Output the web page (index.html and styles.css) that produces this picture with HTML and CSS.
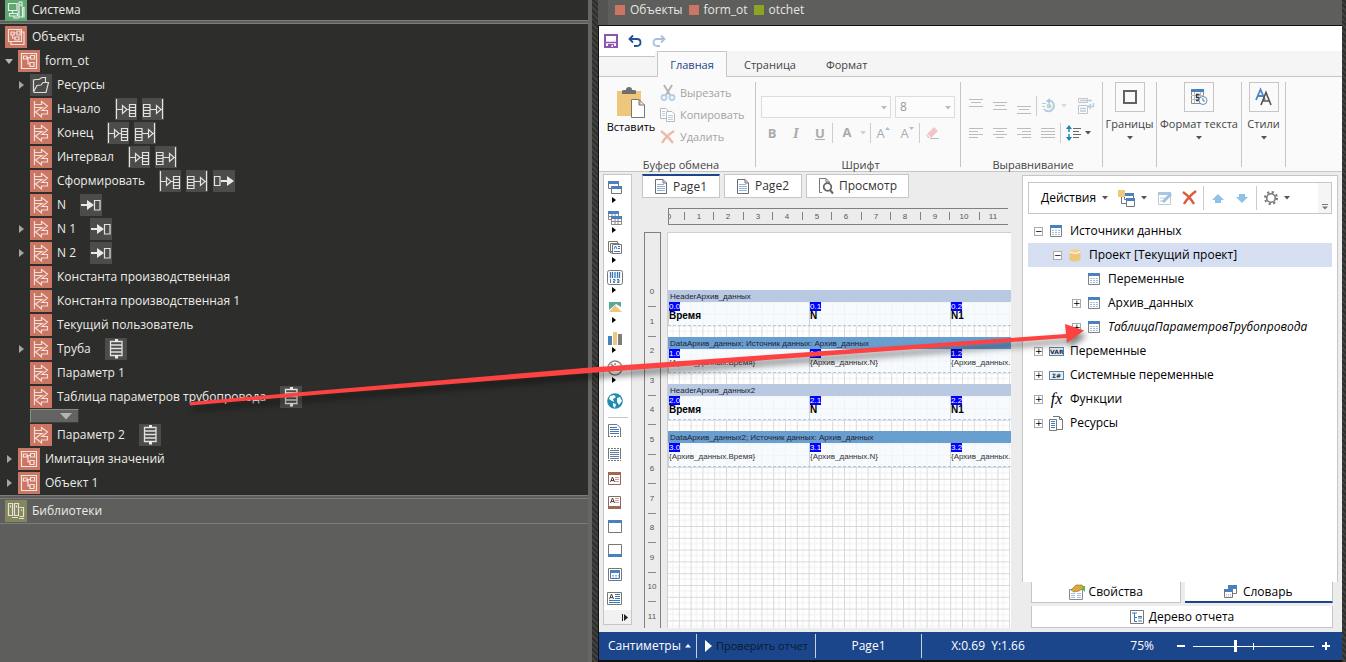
FILE: index.html
```html
<!DOCTYPE html>
<html lang="ru">
<head>
<meta charset="utf-8">
<title>otchet</title>
<link rel="stylesheet" href="styles.css">
</head>
<body>
<svg class="defs" aria-hidden="true">
  <symbol id="system" viewBox="0 0 22 22"><g fill="none" stroke="#e9efe9" stroke-width="1.2"><path d="M3.500 4.500H12V11.500H3.500ZM7.500 11.500V14M4.500 14.500H12.500V17H4.500ZM14 3H17V8M14 3V18H17.500V8.500M14 6H17M17.500 8.500H19V18.500M9 17V19H14M12.500 13H14"/></g></symbol>
  <symbol id="objects" viewBox="0 0 22 22"><g fill="none" stroke="#f6dfda" stroke-width="1.200"><path d="M3.500 3.500H16.500V15.500H3.500ZM6 16V18.500H19V6H17M6 6H9V9H6ZM12 5H15V9H12ZM9 7H12M7.500 9V12H10M10 11H14V14H10Z"/></g></symbol>
  <symbol id="form" viewBox="0 0 22 22"><g fill="none" stroke="#f6e4e0" stroke-width="1.200"><path d="M3.500 3.500H18.500V18.500H3.500ZM5.500 6H9V9H5.500ZM12.500 5.500H16.500V9H12.500ZM9 7.500H12.500M10 7.500V14H12M12 12.500H16V16.500H12Z"/></g></symbol>
  <symbol id="param" viewBox="0 0 22 22"><path d="M4.500 3V19M4.500 6.500H11.500V3.500L17.500 8L12 12.500H17.500V16H11.500V19L5.500 14L12 9.500H5" fill="none" stroke="#f3ddd8" stroke-width="1.200"/></symbol>
  <symbol id="folder" viewBox="0 0 22 22"><path d="M3.500 18V6L6 5.500H9L12 3.500H15.500V8M3.500 18L7 11.500L11 11L13 8.500H18.500L16 18.500L3.500 18.500" fill="none" stroke="#dedede" stroke-width="1.200"/></symbol>
  <symbol id="library" viewBox="0 0 22 22"><path d="M3.500 3.500H7.500V15.500H3.500ZM9.500 3.500H13.500V15.500H9.500ZM14.500 7.500H18.500V16.500H14.500M5.500 5.500V7.500M11.500 5.500V7.500M16.500 9.500V11M7 17.500H13M14 18.500H19" fill="none" stroke="#e4e4d2" stroke-width="1.200"/></symbol>
  <symbol id="b-in" viewBox="0 0 22 22"><path d="M1.500 1V21M1.500 11.500H7M7.500 7.500V15.500L12 11.500ZM12 11.500H14M14.500 6.500H20.500V18.500H14.500ZM14.500 9.500H20.500M14.500 12.500H20.500M14.500 15.500H20.500" fill="none" stroke="#e2e2e0" stroke-width="1.200"/></symbol>
  <symbol id="b-out" viewBox="0 0 22 22"><path d="M20.500 1V21M8 11.500H14M14.500 7.500V15.500L19 11.500ZM19 11.500H20M1.500 6.500H8V18.500H1.500ZM1.500 9.500H8M1.500 12.500H8M1.500 15.500H8" fill="none" stroke="#e2e2e0" stroke-width="1.200"/></symbol>
  <symbol id="b-right" viewBox="0 0 22 22"><path d="M1.500 6.500H7V15.500H1.500Z" fill="none" stroke="#e2e2e0" stroke-width="1.200"/><path d="M8 10H14V6L21 11L14 16V12H8Z" fill="#e9e9e6"/></symbol>
  <symbol id="b-left" viewBox="0 0 22 22"><path d="M14.500 6.500H20V16H14.500Z" fill="none" stroke="#e2e2e0" stroke-width="1.200"/><path d="M1 10H7V6L14 11L7 16V12H1Z" fill="#e9e9e6"/></symbol>
  <symbol id="b-table" viewBox="0 0 22 22"><path d="M5.500 3.500H17V17.500H5.500ZM6 7H17M6 10.500H17M6 14H17" fill="none" stroke="#e2e2e0" stroke-width="1.300"/><path d="M10 1H13V4H10ZM10 17H13V20.500H10Z" fill="#e9e9e6"/></symbol>
  <symbol id="sheet" viewBox="0 0 12 15"><path d="M.5.5H8L11.500 4V14.500H.5ZM8 .5V4H11.500" fill="#fff" stroke="#6c6c6c"/><path d="M2 5.500H9M2 7.500H10M2 9.500H10M2 11.500H10" stroke="#8fb4d8"/></symbol>
  <symbol id="table" viewBox="0 0 12 12"><path d="M.5.5H11.500V11.500H.5Z" fill="#fff" stroke="#7f7f7f"/><path d="M0 0H12V3H0Z" fill="#4a80bb"/><path d="M2 5.500H10M2 7.500H10M2 9.500H10" stroke="#9fbfe4" stroke-dasharray="2 1"/></symbol>
  <symbol id="caret" viewBox="0 0 6 4"><path d="M0 0H6L3 3.500Z" fill="currentColor"/></symbol>
</svg>

<div class="shell">
  <nav class="explorer">
    <section class="block block-top">
      <div class="row l0"><svg class="ic green"><use href="#system"/></svg><span>Система</span></div>
    </section>
    <section class="block">
      <div class="row l0"><svg class="ic red"><use href="#objects"/></svg><span>Объекты</span></div>
      <div class="row l1"><button class="tw open" aria-label="Свернуть"></button><svg class="ic red"><use href="#form"/></svg><span>form_ot</span></div>
      <div class="row l2"><button class="tw" aria-label="Развернуть"></button><svg class="ic dim"><use href="#folder"/></svg><span>Ресурсы</span></div>
      <div class="row l2"><svg class="ic red"><use href="#param"/></svg><span>Начало</span><i class="badges"><svg class="ic dim"><use href="#b-in"/></svg><svg class="ic dim"><use href="#b-out"/></svg></i></div>
      <div class="row l2"><svg class="ic red"><use href="#param"/></svg><span>Конец</span><i class="badges"><svg class="ic dim"><use href="#b-in"/></svg><svg class="ic dim"><use href="#b-out"/></svg></i></div>
      <div class="row l2"><svg class="ic red"><use href="#param"/></svg><span>Интервал</span><i class="badges"><svg class="ic dim"><use href="#b-in"/></svg><svg class="ic dim"><use href="#b-out"/></svg></i></div>
      <div class="row l2"><svg class="ic red"><use href="#param"/></svg><span>Сформировать</span><i class="badges"><svg class="ic dim"><use href="#b-in"/></svg><svg class="ic dim"><use href="#b-out"/></svg><svg class="ic dim"><use href="#b-right"/></svg></i></div>
      <div class="row l2"><svg class="ic red"><use href="#param"/></svg><span>N</span><i class="badges"><svg class="ic dim"><use href="#b-left"/></svg></i></div>
      <div class="row l2"><button class="tw" aria-label="Развернуть"></button><svg class="ic red"><use href="#param"/></svg><span>N 1</span><i class="badges"><svg class="ic dim"><use href="#b-left"/></svg></i></div>
      <div class="row l2"><button class="tw" aria-label="Развернуть"></button><svg class="ic red"><use href="#param"/></svg><span>N 2</span><i class="badges"><svg class="ic dim"><use href="#b-left"/></svg></i></div>
      <div class="row l2"><svg class="ic red"><use href="#param"/></svg><span>Константа производственная</span></div>
      <div class="row l2"><svg class="ic red"><use href="#param"/></svg><span>Константа производственная 1</span></div>
      <div class="row l2"><svg class="ic red"><use href="#param"/></svg><span>Текущий пользователь</span></div>
      <div class="row l2"><button class="tw" aria-label="Развернуть"></button><svg class="ic red"><use href="#param"/></svg><span>Труба</span><i class="badges"><svg class="ic dim"><use href="#b-table"/></svg></i></div>
      <div class="row l2"><svg class="ic red"><use href="#param"/></svg><span>Параметр 1</span></div>
      <div class="row l2"><svg class="ic red"><use href="#param"/></svg><span>Таблица параметров трубопровода</span><i class="badges"><svg class="ic dim"><use href="#b-table"/></svg></i></div>
      <button class="drop" aria-label="Ещё"><svg width="12" height="7"><path d="M0 0H12L6 6.500Z" fill="#b4b4b0"/></svg></button>
      <div class="row l2"><svg class="ic red"><use href="#param"/></svg><span>Параметр 2</span><i class="badges"><svg class="ic dim"><use href="#b-table"/></svg></i></div>
      <div class="row l1"><button class="tw" aria-label="Развернуть"></button><svg class="ic red"><use href="#form"/></svg><span>Имитация значений</span></div>
      <div class="row l1"><button class="tw" aria-label="Развернуть"></button><svg class="ic red"><use href="#form"/></svg><span>Объект 1</span></div>
    </section>
    <section class="block libs">
      <div class="row l0"><svg class="ic olive"><use href="#library"/></svg><span>Библиотеки</span></div>
    </section>
  </nav>
  <div class="splitter"></div>

  <main class="main">
    <div class="crumbs"><i class="sq"></i><span>Объекты</span><i class="sq"></i><span>form_ot</span><i class="sq lime"></i><span>otchet</span></div>
    <div class="app">
      <div class="quick">
        <button aria-label="Сохранить"><svg width="14" height="14"><path d="M1 1H13V13H1Z" fill="#fff" stroke="#8d57b0" stroke-width="2"/><path d="M1 8.500H13" stroke="#8d57b0" stroke-width="1.500"/><path d="M4 10H10V14H4Z" fill="#8d57b0"/><path d="M7.500 11H9V13H7.500Z" fill="#fff"/></svg></button>
        <button aria-label="Отменить"><svg width="14" height="12"><path d="M5 .5L1.500 4L5 7.500M2 4H9Q12.500 4 12.500 7.500T8.500 11H6" fill="none" stroke="#1e4f9a" stroke-width="1.800"/></svg></button>
        <button aria-label="Повторить"><svg width="14" height="12"><path d="M9 .5L12.500 4L9 7.500M12 4H5Q1.500 4 1.500 7.500T5.500 11H8" fill="none" stroke="#a9c0dc" stroke-width="1.800"/></svg></button>
      </div>
      <div class="tabs">
        <i class="stub"></i>
        <button class="tab on">Главная</button><button class="tab">Страница</button><button class="tab">Формат</button>
      </div>
      <div class="ribbon">
        <div class="group clip">
          <div class="gbody">
            <button class="paste"><svg width="30" height="31"><path d="M1 4H25V29H1Z" fill="#eec77d"/><path d="M6 7V4Q6 3 8 3H10Q10 0 13 0T16 3H18Q20 3 20 4V7Z" fill="#6f6f6f"/><path d="M15.500 12.500H23L28.500 18V30.500H15.500ZM23 12.500V18H28.500" fill="#fff" stroke="#777"/></svg>Вставить</button>
            <div class="edits">
              <button disabled><svg width="16" height="16"><path d="M4 0L10 10M12 0L6 10" stroke="#b5b5b5" stroke-width="2"/><circle cx="4" cy="12.500" r="2.500" fill="none" stroke="#b6cfe7" stroke-width="1.800"/><circle cx="12" cy="12.500" r="2.500" fill="none" stroke="#b6cfe7" stroke-width="1.800"/></svg>Вырезать</button>
              <button disabled><svg width="16" height="16"><path d="M.5 1.500H6L8 3.500V11.500H.5Z" fill="#fff" stroke="#b8b8b8"/><path d="M6.500 4.500H12L14.500 7V14.500H6.500Z" fill="#fff" stroke="#b8b8b8"/><path d="M2 4.500H5M2 6.500H5M2 8.500H5M8 8.500H13M8 10.500H13M8 12.500H13" stroke="#b6cfe7"/></svg>Копировать</button>
              <button disabled><svg width="16" height="14"><path d="M1 1Q8 6 13 13M14 1Q6 6 2 13" fill="none" stroke="#edb9aa" stroke-width="2.400"/></svg>Удалить</button>
            </div>
          </div>
          <div class="glabel">Буфер обмена</div>
        </div>
        <div class="group font">
          <div class="gbody col">
            <div class="combos">
              <label class="combo wide"><select aria-label="Шрифт" disabled><option></option></select><svg><use href="#caret"/></svg></label>
              <label class="combo"><select aria-label="Размер" disabled><option>8</option></select><svg><use href="#caret"/></svg></label>
            </div>
            <div class="tools">
              <button disabled><b>B</b></button><button disabled><b class="it">I</b></button><button disabled><b class="un">U</b></button><i class="sep"></i>
              <button disabled><b class="up">A</b></button><svg class="car"><use href="#caret"/></svg><i class="sep"></i>
              <button disabled class="grow">A<svg width="5" height="3"><path d="M0 3H5L2.500 0Z" fill="#a3c1df"/></svg></button>
              <button disabled class="grow">A<svg width="5" height="3"><path d="M0 0H5L2.500 3Z" fill="#a3c1df"/></svg></button><i class="sep"></i>
              <button disabled><svg width="14" height="14"><path d="M9 1L13 5L6 12H3L1 9Z" fill="#f3c4ca"/><path d="M2 8L6 12" stroke="#fff"/><path d="M5 12.500H14" stroke="#bbb"/></svg></button>
            </div>
          </div>
          <div class="glabel">Шрифт</div>
        </div>
        <div class="group align">
          <div class="gbody col">
            <div class="tools first">
              <button disabled><svg width="14" height="16"><path d="M0 1.500H14M2 4.500H12M0 8.500H14" stroke="#bcbcbc"/></svg></button>
              <button disabled><svg width="14" height="16"><path d="M0 4.500H14M2 7.500H12M0 11.500H14" stroke="#bcbcbc"/></svg></button>
              <button disabled><svg width="14" height="16"><path d="M0 8.500H14M2 11.500H12M0 15.500H14" stroke="#bcbcbc"/></svg></button><i class="sep"></i>
              <button disabled><svg width="14" height="15"><path d="M8 2.500A5.500 5.500 0 1 1 2 11" fill="none" stroke="#b4cbe4" stroke-width="2"/><path d="M8 0V6L4 3Z" fill="#a9c4e0"/><circle cx="7" cy="8" r="2.500" fill="#bcd8cc"/><path d="M0 5.500H4M0 8.500H3" stroke="#b4cbe4"/></svg></button><svg class="car pale"><use href="#caret"/></svg>
              <button disabled><svg width="16" height="16"><path d="M.5.5H9.500V4.500H.5ZM.5 7.500H9.500V15.500H.5Z" fill="#fff" stroke="#c4c4c4"/><path d="M2 2.500H14M2 10.500H8M2 13H8M15.500 5V8.500H11M13 6L10.500 8.500L13 11" fill="none" stroke="#b4cbe4" stroke-width="1.300"/></svg></button>
            </div>
            <div class="tools">
              <button disabled><svg width="14" height="11"><path d="M0 .5H14M0 3.500H9M0 6.500H14M0 9.500H9" stroke="#bcbcbc"/></svg></button>
              <button disabled><svg width="14" height="11"><path d="M0 .5H14M3 3.500H11M0 6.500H14M3 9.500H11" stroke="#bcbcbc"/></svg></button>
              <button disabled><svg width="14" height="11"><path d="M0 .5H14M5 3.500H14M0 6.500H14M5 9.500H14" stroke="#bcbcbc"/></svg></button>
              <button disabled><svg width="14" height="11"><path d="M0 .5H14M0 3.500H14M0 6.500H14M0 9.500H14" stroke="#bcbcbc"/></svg></button><i class="sep"></i>
              <button aria-label="Интервал"><svg width="15" height="16"><path d="M3 0L6 4H0ZM3 16L6 12H0Z" fill="#1587b5"/><path d="M3 3V13" stroke="#1587b5" stroke-width="1.400" stroke-dasharray="4 2"/><path d="M7 3.500H15M7 6.500H13M7 9.500H15M7 12.500H13" stroke="#6a6a6a" stroke-width="1.200"/></svg></button><svg class="car dark"><use href="#caret"/></svg>
            </div>
          </div>
          <div class="glabel">Выравнивание</div>
        </div>
        <button class="group big w1"><span class="box"><svg width="14" height="14"><path d="M1 1H13V13H1Z" fill="none" stroke="#636363" stroke-width="2"/></svg></span>Границы<svg class="car dark"><use href="#caret"/></svg></button>
        <button class="group big w2"><span class="box"><svg width="17" height="16"><path d="M.5.500H12.500V14.500H.5Z" fill="#fff" stroke="#8b8b8b"/><path d="M0 6.500H13M0 10.500H13M3.500 3V14M9.500 3V14" stroke="#bbb"/><path d="M0 0H13V3H0Z" fill="#4a80bb"/><path d="M8.500 5.500H5.500V8.500H8V11.500H5" fill="none" stroke="#333" stroke-width="1.300"/><circle cx="12" cy="11.500" r="4" fill="#fff" stroke="#5c92c8"/><path d="M12 9V12H14" fill="none" stroke="#777"/></svg></span>Формат текста<svg class="car dark"><use href="#caret"/></svg></button>
        <button class="group big w3"><span class="box"><svg width="18" height="18"><path d="M1 12L5.500 1.500L10 12M2.500 8H8.500" fill="none" stroke="#4a87c4" stroke-width="1.800"/><path d="M6 17L11 4.500L16 17M8 13H14.500" fill="none" stroke="#555" stroke-width="1.600"/></svg></span>Стили<svg class="car dark"><use href="#caret"/></svg></button>
      </div>

      <div class="work">
        <aside class="toolbox">
          <button class="dd"><svg width="16" height="16"><path d="M1.500 1.500H11.500V8.500H1.500Z" fill="#fff" stroke="#777"/><path d="M1 1H12V4H1Z" fill="#4a80bb"/><path d="M4.500 6.500H14.500V13.500H4.500Z" fill="#fff" stroke="#777"/><path d="M4 6H15V9H4Z" fill="#4a80bb"/></svg></button>
          <button class="dd"><svg width="16" height="16"><path d="M1.500 1.500H11.500V9.500H1.500ZM1 6.500H12M5 4V9M8 4V9" fill="#fff" stroke="#888"/><path d="M1 1H12V4H1Z" fill="#4a80bb"/><path d="M4.500 6.500H14.500V14.500H4.500ZM4 11.500H15M8 9V14M11 9V14" fill="#fff" stroke="#888"/><path d="M4 6H15V9H4Z" fill="#4a80bb"/></svg></button>
          <button class="dd"><svg width="16" height="16"><path d="M1.500 1.500H10.500V11.500H1.500ZM3.500 3.500H12V13H3.500Z" fill="#fff" stroke="#777"/><path d="M5.500 4.500H14.500V13.500H5.500Z" fill="#fff" stroke="#777"/><path d="M7 9L8.500 6L10 9M11 6.500H13M11 8.500H13M7 11.500H13" fill="none" stroke="#3d78b8"/></svg></button>
          <button class="dd"><svg width="16" height="16"><rect x=".5" y=".5" width="15" height="14" rx="2" fill="#fff" stroke="#777"/><path d="M3.500 2V8M5.500 2V8M8 2V8M10.500 2V8M12.500 2V8" stroke="#3d78b8" stroke-width="1.300"/><path d="M3.500 9V13M6 9.500H8V11H6.500V12.500H8M10 9.500H12V12.500H10M10 11H12" fill="none" stroke="#3d78b8"/></svg></button>
          <button class="dd"><svg width="16" height="16"><path d="M2 2H14V7L9 4L2 10Z" fill="#58a898"/><path d="M2 12L8 5L15 12Z" fill="#eec77d"/></svg></button>
          <button class="dd"><svg width="16" height="16"><path d="M1 6H5V15H1Z" fill="#4a80bb"/><path d="M6 2H10V15H6Z" fill="#eec77d"/><path d="M11 4H15V15H11Z" fill="#7c7c7c"/></svg></button>
          <button class="dd"><svg width="16" height="16"><circle cx="8" cy="8" r="7" fill="#fff" stroke="#8a8a8a" stroke-width="1.500"/><path d="M4 4L9 9M3 8H5M11 8H13M8 3V5" stroke="#777" stroke-width="1.300"/></svg></button>
          <button class="globe"><svg width="16" height="16"><circle cx="8" cy="8" r="7.800" fill="#1f8db0"/><path d="M3 3L7 2L9 4L6 6L7 9L5 8L2 6ZM10 5L13 4L15 8L12 12L10 9ZM6 10L9 11L8 15L6 13Z" fill="#fff"/></svg></button>
          <hr>
          <button class="it24"><svg width="15" height="15"><path d="M1.500 13V1.500H10L13.500 5V13" fill="#fff" stroke="#777"/><path d="M3 4.500H10M3 6.500H12M3 8.500H12M3 10.500H12" stroke="#3d78b8"/><path d="M1 13.500H14" stroke="#777" stroke-dasharray="2 1"/></svg></button>
          <button class="it24"><svg width="15" height="15"><path d="M1.500 2V12M13.500 2V12" stroke="#777"/><path d="M3 3.500H12M3 5.500H12M3 7.500H12M3 9.500H12M3 11.500H12" stroke="#5f7d9f"/><path d="M1 1.500H14M1 13.500H14" stroke="#777" stroke-dasharray="2 1"/></svg></button>
          <button class="it24"><svg width="15" height="15"><path d="M1.500 1.500H13.500V13.500H1.500Z" fill="#fff" stroke="#8a6a62"/><path d="M1 1H14V4H1Z" fill="#a56553"/><path d="M3.500 11L5.500 6L7.500 11M4 9.500H7" fill="none" stroke="#444"/><path d="M8 6.500H12M8 8.500H12M8 10.500H12" stroke="#d79c8c"/></svg></button>
          <button class="it24"><svg width="15" height="15"><path d="M1.500 1.500H13.500V13.500H1.500Z" fill="#fff" stroke="#8a6a62"/><path d="M1 11H14V14H1Z" fill="#a56553"/><path d="M3.500 8L5.500 3L7.500 8M4 6.500H7" fill="none" stroke="#444"/><path d="M8 3.500H12M8 5.500H12M8 7.500H12" stroke="#d79c8c"/></svg></button>
          <button class="it24"><svg width="15" height="15"><path d="M1.500 1.500H14.500V13.500H1.500Z" fill="#fff" stroke="#777"/><path d="M1 1H15V4H1Z" fill="#4a80bb"/></svg></button>
          <button class="it24"><svg width="15" height="15"><path d="M1.500 1.500H14.500V13.500H1.500Z" fill="#fff" stroke="#777"/><path d="M1 11H15V14H1Z" fill="#4a80bb"/></svg></button>
          <button class="it24"><svg width="15" height="15"><path d="M1.500 1.500H14.500V13.500H1.500Z" fill="#fff" stroke="#777"/><path d="M3.500 3.500H12.500V11.500H3.500Z" fill="#fff" stroke="#3d78b8"/><path d="M3 3H13V6H3Z" fill="#4a80bb"/><path d="M5 8.500H12M5 10H12" stroke="#8fb4d8" stroke-dasharray="2 1"/></svg></button>
          <button class="it24"><svg width="15" height="15"><path d="M.5 1.500H14.500V13.500H.5Z" fill="#fff" stroke="#777"/><path d="M2.500 8L4.500 3L6.500 8M3 6.500H6" fill="none" stroke="#444"/><path d="M8 3.500H13M8 5.500H13M8 7.500H13M2 9.500H13M2 11.500H13" stroke="#3d78b8"/></svg></button>
          <button class="more"><svg width="6" height="7"><path d="M.5 0V7" stroke="#222"/><path d="M2 0L6 3.500L2 7Z" fill="#222"/></svg></button>
        </aside>

        <div class="designer">
          <div class="pages">
            <button class="pg on"><svg width="12" height="15"><use href="#sheet"/></svg>Page1</button>
            <button class="pg"><svg width="12" height="15"><use href="#sheet"/></svg>Page2</button>
            <button class="pg view"><svg width="16" height="16"><path d="M4 14.500H1.500V.5H8L11.500 4V5M8 .5V4H11" fill="#fff" stroke="#777"/><circle cx="9.500" cy="9" r="3.800" fill="none" stroke="#666" stroke-width="1.800"/><path d="M12 12L15 15.500" stroke="#666" stroke-width="2"/></svg>Просмотр</button>
          </div>
          <div class="hruler"><svg><g class="num"><text x="0" y="10">0</text><text x="30" y="10">1</text><text x="59" y="10">2</text><text x="89" y="10">3</text><text x="118" y="10">4</text><text x="148" y="10">5</text><text x="177" y="10">6</text><text x="207" y="10">7</text><text x="236" y="10">8</text><text x="266" y="10">9</text><text x="295" y="10">10</text><text x="324" y="10">11</text></g><path d="M15.500 3V11M44.500 3V11M74.500 3V11M103.500 3V11M133.500 3V11M162.500 3V11M192.500 3V11M221.500 3V11M251.500 3V11M280.500 3V11M310.500 3V11" stroke="#808080"/></svg></div>
          <div class="sheetrow">
            <div class="vruler"><svg><g class="num"><text x="7" y="61">0</text><text x="7" y="91">1</text><text x="7" y="120">2</text><text x="7" y="150">3</text><text x="7" y="179">4</text><text x="7" y="209">5</text><text x="7" y="238">6</text><text x="7" y="268">7</text><text x="7" y="297">8</text><text x="7" y="327">9</text><text x="7" y="356">10</text><text x="7" y="386">11</text></g><path d="M3 73.500H11M3 103.500H11M3 132.500H11M3 162.500H11M3 191.500H11M3 221.500H11M3 250.500H11M3 280.500H11M3 309.500H11M3 339.500H11M3 368.500H11" stroke="#8a8a8a"/></svg></div>
            <div class="page">
              <svg class="grid"><defs><pattern id="g" width="11.800" height="11.800" patternUnits="userSpaceOnUse"><path d="M5.900 0V11.800M0 5.900H11.800" stroke="#f0f0f0" stroke-width="1"/><path d="M.5 0V11.800M0 .5H11.800" stroke="#d9d9d9" stroke-width="1"/></pattern></defs><rect width="100%" height="100%" fill="url(#g)"/></svg>
              <div class="bands">
                <div class="band"><div class="bar">HeaderАрхив_данных</div><div class="cells head"><div><em>0.0</em>Время</div><div><em>0.1</em>N</div><div><em>0.2</em>N1</div></div></div>
                <div class="band data"><div class="bar">DataАрхив_данных; Источник данных: Архив_данных</div><div class="cells"><div><em>1.0</em>{Архив_данных.Время}</div><div><em>1.1</em>{Архив_данных.N}</div><div><em>1.2</em>{Архив_данных.</div></div></div>
                <div class="band"><div class="bar">HeaderАрхив_данных2</div><div class="cells head"><div><em>2.0</em>Время</div><div><em>2.1</em>N</div><div><em>2.2</em>N1</div></div></div>
                <div class="band data"><div class="bar">DataАрхив_данных2; Источник данных: Архив_данных</div><div class="cells"><div><em>3.0</em>{Архив_данных.Время}</div><div><em>3.1</em>{Архив_данных.N}</div><div><em>3.2</em>{Архив_данных.</div></div></div>
              </div>
            </div>
          </div>
        </div>

        <aside class="side">
          <div class="dict">
            <div class="dbar">
              <button class="act">Действия<svg class="car dark"><use href="#caret"/></svg></button>
              <button class="new"><svg width="17" height="17"><path d="M6.500 3.500H15.500V9.500H6.500Z" fill="#fff" stroke="#777"/><path d="M6 3H16V6H6Z" fill="#4a80bb"/><path d="M8.500 8.500H16.500V16.500H8.500Z" fill="#fff" stroke="#777"/><path d="M8 8H17V11H8Z" fill="#4a80bb"/><path d="M0 0H7V7H0Z" fill="#eec77d"/><path d="M3.500 7V13.500H8" fill="none" stroke="#777"/></svg><svg class="car dark"><use href="#caret"/></svg></button>
              <button disabled aria-label="Изменить"><svg width="15" height="14"><path d="M.5 1.500H12.500V13.500H.5Z" fill="#fff" stroke="#bfcbd8"/><path d="M0 1H13V4H0Z" fill="#a9c6e2"/><path d="M2 7H8M2 10H6" stroke="#b8cde2"/><path d="M5 11L13 3" stroke="#a0bfdf" stroke-width="3"/></svg></button>
              <button aria-label="Удалить"><svg width="15" height="14"><path d="M1 1Q8 6 12 13M14 0Q6 6 2 13" fill="none" stroke="#dc5a3c" stroke-width="2.400"/></svg></button><i class="sep"></i>
              <button aria-label="Вверх"><svg width="12" height="9"><path d="M6 0L12 6H9V9H3V6H0Z" fill="#8fc2e8"/></svg></button>
              <button aria-label="Вниз"><svg width="12" height="9"><path d="M6 9L12 3H9V0H3V3H0Z" fill="#8fc2e8"/></svg></button><i class="sep"></i>
              <button class="gear" aria-label="Настройки"><svg width="14" height="14"><circle cx="7" cy="7" r="4.300" fill="none" stroke="#777" stroke-width="1.600"/><circle cx="7" cy="7" r="6" fill="none" stroke="#777" stroke-width="2" stroke-dasharray="2.200 2.512"/></svg><svg class="car dark"><use href="#caret"/></svg></button>
              <span class="ovf"><svg width="6" height="6"><path d="M0 .5H6" stroke="#777"/><path d="M0 2.500H6L3 5.500Z" fill="#777"/></svg></span>
            </div>
            <div class="tree">
              <div class="node"><button class="pm">−</button><svg class="ti"><use href="#table"/></svg>Источники данных</div>
              <div class="node n2 sel"><button class="pm">−</button><svg class="ti"><path d="M.5 2V11Q6 14 11.500 11V2Z" fill="#eec77d"/><ellipse cx="6" cy="2" rx="5.500" ry="1.800" fill="#f2d293"/><path d="M.5 3Q6 6 11.500 3" fill="none" stroke="#fff"/></svg>Проект [Текущий проект]</div>
              <div class="node n3"><i class="pm none"></i><svg class="ti"><use href="#table"/></svg>Переменные</div>
              <div class="node n3"><button class="pm">+</button><svg class="ti"><use href="#table"/></svg>Архив_данных</div>
              <div class="node n3 ital"><button class="pm">+</button><svg class="ti"><use href="#table"/></svg>ТаблицаПараметровТрубопровода</div>
              <div class="node"><button class="pm">+</button><span class="tag">VAR</span>Переменные</div>
              <div class="node"><button class="pm">+</button><span class="tag">Σ#</span>Системные переменные</div>
              <div class="node"><button class="pm">+</button><span class="fx">fx</span>Функции</div>
              <div class="node"><button class="pm">+</button><svg class="ti res" viewBox="0 0 14 15"><path d="M4 .5H10.500L13.500 3.500V13.500H7M10.500 .5V3.500H13.500" fill="#fff" stroke="#777"/><path d="M.5 3.500H7.500V14.500H.5Z" fill="#fff" stroke="#777"/><path d="M2 5.500H6M2 7.500H6M2 9.500H6M2 11.500H6" stroke="#3d78b8"/></svg>Ресурсы</div>
            </div>
          </div>
          <div class="stabs">
            <button><svg width="16" height="16"><path d="M.5 5.500H13.500V15.500H.5Z" fill="#fff" stroke="#888"/><path d="M2 9.500H6M8 9.500H12M2 11.500H6M8 11.500H12M2 13.500H6M8 13.500H12" stroke="#9fbfe4"/><path d="M2 6L7 1H13L15 4L10 7L5 8Z" fill="#d9a93a" stroke="#8d6c22" stroke-width=".6"/><path d="M14 2H16V8L13 5Z" fill="#64b54d"/></svg>Свойства</button>
            <button class="on"><svg width="13" height="13"><path d="M4.500 .5H12.500V8.500H4.500Z" fill="#fff" stroke="#777"/><path d="M4 0H13V4H4Z" fill="#4a80bb"/><path d="M.5 4.500H8.500V12.500H.5Z" fill="#fff" stroke="#777"/><path d="M0 4H9V7H0Z" fill="#4a80bb"/><path d="M2 9.500H8M2 11H8" stroke="#9fbfe4" stroke-dasharray="1 1"/></svg>Словарь</button>
          </div>
          <button class="rtree"><svg width="14" height="14"><path d="M.5.500H13.500V13.500H.5Z" fill="#fff" stroke="#777"/><path d="M2 3H7M4.500 3V11.500H7M4.500 7.500H7" fill="none" stroke="#3d78b8"/><path d="M8 6.500H12M8 8H12M8 11H12" stroke="#3d78b8"/></svg>Дерево отчета</button>
        </aside>
      </div>

      <footer class="status">
        <button class="s1">Сантиметры<svg width="6" height="4"><path d="M0 3.500H6L3 0Z" fill="#fff"/></svg></button>
        <button class="s2"><svg width="7" height="12"><path d="M0 0L7 6L0 12Z" fill="#fff"/></svg>Проверить отчет</button>
        <span class="s3">Page1</span>
        <span class="s4">X:0.69&nbsp; Y:1.66</span>
        <span class="pct">75%</span>
        <div class="zoom"><button aria-label="Уменьшить"><svg width="8" height="8"><path d="M0 4H8" stroke="#fff" stroke-width="2"/></svg></button><div class="range"><input type="range" aria-label="Масштаб" min="0" max="100" value="35"><i></i></div><button aria-label="Увеличить"><svg width="8" height="8"><path d="M0 4H8M4 0V8" stroke="#fff" stroke-width="2"/></svg></button></div>
      </footer>
    </div>
  </main>
  <div class="edge"></div>
  <svg class="arrow" width="910" height="100"><path d="M1 82L131 70.500L401 47.500L877 14L876 4L895 10.500L878 23L877.500 18L401 53L131 74.500L1 85.500Z" fill="#fd4242"/></svg>
</div>
</body>
</html>
```
FILE: styles.css
```css
* { box-sizing: border-box; }
html, body { height: 100%; }
body { margin: 0; overflow: hidden; background: #5e5e5c; color: #222; font: 12px/16px "Open Sans", "Noto Sans", sans-serif; }
button { margin: 0; padding: 0; border: 0; background: none; color: inherit; font: inherit; white-space: nowrap; }
svg { display: block; flex: none; overflow: visible; }
i { font-style: normal; }
.defs { position: absolute; width: 0; height: 0; }
.shell { position: relative; display: flex; min-height: 100vh; }

/* object explorer */
.explorer { flex: 588 1 0; min-width: 0; color: #ecece8; }
.block { background: #2d2d2b; border-bottom: 1px solid #7c7c7a; }
.block + .block { margin-top: 2px; border-top: 1px solid #7c7c7a; }
.block-top { height: 23px; }
.block-top .row { margin-top: -2px; }
.block-top + .block { padding-top: 1px; }
.block.libs { background: none; }
.row { position: relative; display: flex; align-items: center; height: 24px; gap: 5px; white-space: nowrap; }
.l0 { padding-left: 5px; }
.l1 { padding-left: 18px; }
.l2 { padding-left: 30px; }
.ic { width: 22px; height: 22px; }
.red { background: #cb7563; }
.green { background: #5fa872; }
.olive { background: #85855f; }
.dim { background: #4c4c4a; }
.badges { display: flex; gap: 5px; margin-left: 9px; }
.tw { width: 14px; height: 14px; margin-left: -16px; margin-right: -3px; display: flex; align-items: center; justify-content: center; }
.tw::before { content: ""; border: 4px solid transparent; border-left: 5px solid #a5a5a1; border-right: 0; }
.tw.open::before { border: 4px solid transparent; border-top: 5px solid #b8b8b4; border-bottom: 0; }
.drop { display: flex; align-items: center; justify-content: flex-end; width: 49px; height: 14px; margin: 0 0 0 30px; padding-right: 6px; background: #636361; border: 1px solid #8a8a88; border-right-color: #3c3c3a; border-bottom-color: #3c3c3a; }
.splitter { flex: 0 0 10px; border-left: 4px solid #666664; }
.splitter, .edge { background: repeating-linear-gradient(45deg, #2f2f2d 0 2px, #41413f 2px 4px); background-clip: padding-box; }
.edge { flex: 0 0 4px; }

.main { flex: 744 1 0; min-width: 0; display: flex; flex-direction: column; padding-bottom: 2px; background: #111; }
.crumbs { display: flex; align-items: center; gap: 5px; height: 25px; margin-bottom: 1px; padding: 0 0 6px 7px; background: #5e5e5c; color: #e6e6e2; border-left: 10px solid #545452; }
.crumbs span { margin-right: 1px; }
.sq { width: 10px; height: 10px; background: #cb7563; }
.lime { background: #8aa522; }
.app { flex: 1; display: flex; flex-direction: column; margin-left: 1px; background: #fff; min-height: 0; }
.quick { display: flex; align-items: center; gap: 10px; height: 25px; padding: 5px 5px 0; }
.tabs { display: flex; height: 26px; background: #f5f5f5; border-bottom: 1px solid #c6c6c6; font-size: 11px; }
.stub { width: 56px; border-top: 5px solid #fff; margin-right: 2px; box-shadow: inset 0 1px #c6c6c6; }
.tab { padding: 2px 15px 0; color: #444; }
.tab.on { width: 70px; height: 26px; margin-right: 2px; padding: 1px 0 0; color: #1b468b; background: #fafafa; border: 1px solid #c6c6c6; border-bottom: 0; }

/* ribbon */
.ribbon { display: flex; height: 95px; padding: 5px 0 0; background: #fafafa; border-bottom: 1px solid #c6c6c6; color: #444; font-size: 11px; }
.group { display: flex; flex-direction: column; height: 85px; border-right: 1px solid #c6c6c6; }
.gbody { display: flex; flex: 1; }
.col { flex-direction: column; }
.glabel { height: 10px; line-height: 16px; text-align: center; }
.clip { width: 157px; padding-left: 8px; }
.paste { display: flex; flex-direction: column; align-items: center; justify-content: flex-start; width: 48px; padding-top: 5px; color: #000; gap: 1px; }
.edits { display: flex; flex-direction: column; padding-left: 5px; color: #a3a3a3; }
.edits button { display: flex; align-items: center; gap: 4px; height: 22px; }
.font { width: 205px; padding-left: 5px; }
.combos { display: flex; gap: 4px; padding-top: 14px; }
.combo { position: relative; width: 60px; height: 22px; }
.combo.wide { width: 130px; }
.combo select { width: 100%; height: 100%; padding: 0 4px; appearance: none; border: 1px solid #dcdcdc; border-radius: 0; background: #fcfcfc; color: #999; font: inherit; font-size: 12px; opacity: 1; }
.combo svg { position: absolute; right: 4px; top: 10px; width: 6px; height: 4px; color: #bbb; }
.tools { display: flex; align-items: center; height: 30px; color: #ababab; }
.tools button { display: flex; align-items: center; justify-content: center; width: 24px; height: 20px; font-size: 13px; }
.font .tools { margin-left: -1px; }
.sep { width: 1px; height: 20px; background: #cdcdcd; }
.it { font-style: italic; font-family: "Liberation Serif", serif; font-size: 15px; }
.un { text-decoration: underline; }
.up { padding: 0 0 3px 4px; }
.tools .grow svg { margin: -9px 0 0; }
.car { width: 6px; height: 4px; color: #cfcfcf; margin: 0 4px; }
.tools .car { margin: 0 4px 0 3px; }
.car.pale { color: #dadada; }
.car.dark { color: #555; }
.align { width: 142px; padding-left: 3px; }
.tools.first { height: 29px; margin-top: 9px; }
.align .tools.first + .tools { margin-top: -2px; }
.align .tools .car { margin: 0 7px 0 0; }
.big { align-items: center; color: #444; }
.box { display: grid; place-items: center; width: 30px; height: 30px; margin-bottom: 4px; border: 1px solid #c6c6c6; }
.big .car { margin-top: 4px; }
.w1 { width: 54px; }
.w2 { width: 85px; }
.w3 { width: 44px; }

/* work area */
.work { flex: 1; display: flex; min-height: 0; padding: 2px 4px 4px; background: #ececec; }
.toolbox { display: flex; flex-direction: column; align-items: center; width: 29px; height: 451px; padding-top: 1px; background: #fff; border: 1px solid #c6c6c6; }
.toolbox button { flex: none; width: 100%; padding-left: 3px; }
.dd { height: 30px; }
.dd::after { content: ""; display: block; width: 0; margin: 1px 0 0 5px; border: 3px solid transparent; border-left: 4px solid #000; border-right: 0; }
.globe { height: 27px; padding-top: 2px; }
.toolbox hr { flex: none; width: 20px; margin: 4px 0 0; border: 0; border-top: 1px solid #c6c6c6; }
.it24 { height: 24px; }
.toolbox .more { flex: 1; display: flex; align-items: center; justify-content: flex-end; padding-right: 3px; background: #f1f1f1; }
.designer { flex: 1; min-width: 0; display: flex; flex-direction: column; padding: 0 11px 0 10px; }
.pages { display: flex; gap: 4px; height: 24px; }
.pg { display: flex; align-items: center; justify-content: center; gap: 6px; width: 78px; color: #333; background: #fff; border: 1px solid #c6c6c6; }
.pg.on { border-top: 2px solid #1b468b; }
.pg.view { width: 103px; gap: 5px; }
.hruler { height: 17px; margin: 10px 3px 7px 26px; border: 1px solid #808080; border-right: 0; overflow: hidden; }
.hruler svg, .vruler svg { width: 100%; height: 100%; }
.num { font: 8px "Liberation Sans", sans-serif; fill: #555; text-anchor: middle; }
.sheetrow { flex: 1; display: flex; gap: 7px; min-height: 0; }
.vruler { width: 17px; margin-left: 2px; border: 1px solid #808080; border-bottom: 0; overflow: hidden; }
.page { position: relative; flex: 1; min-width: 0; margin-left: -1px; background: #fff; border: 1px solid #d0d0d0; border-width: 1px 0 0 1px; padding-top: 57px; overflow: hidden; font: 8px/12px "Liberation Sans", sans-serif; color: #333; }
.grid { position: absolute; left: -1px; top: 57px; width: 100%; height: 100%; }
.bands { position: relative; }
.band { height: 36px; margin-bottom: 11px; }
.bar { height: 12px; padding: 1px 0 0 2px; background: #b8c9e1; color: #223; white-space: nowrap; }
.data .bar { background: #699ed0; }
.cells { display: flex; height: 24px; border-bottom: 1px dashed #b9c9dd; background: rgba(246, 250, 254, .8); }
.cells div { flex: 0 0 141px; white-space: nowrap; line-height: 9px; border-left: 1px solid #c8d4e4; }
.cells div:last-child { flex: 1; }
.head div { font-size: 10px; font-weight: bold; color: #000; }
.cells em { display: block; width: 11px; height: 9px; background: #00f; color: #fff; font: 8px/9px "Liberation Sans", sans-serif; overflow: hidden; }

/* dictionary */
.side { flex: none; width: 316px; padding-top: 1px; display: flex; flex-direction: column; }
.dict { flex: 1; min-height: 0; padding: 6px 5px; background: #fff; border: 1px solid #c6c6c6; border-bottom: 0; }
.dbar { display: flex; align-items: center; height: 32px; padding-left: 12px; border: 1px solid #c6c6c6; color: #000; }
.dbar button { display: flex; align-items: center; justify-content: center; width: 24px; height: 24px; }
.dbar .act { width: auto; margin-right: 8px; }
.dbar .new { width: 32px; margin-right: 5px; }
.dbar .gear { width: 36px; }
.dbar .sep { height: 24px; margin: 0 2px; }
.dbar .car { margin: 0 0 0 6px; }
.ovf { display: flex; align-items: flex-end; justify-content: center; width: 13px; height: 30px; margin-left: auto; padding-bottom: 3px; background: #f5f5f5; }
.tree { padding-top: 5px; color: #000; }
.node { display: flex; align-items: center; height: 24px; padding-left: 6px; white-space: nowrap; }
.n2 { padding-left: 25px; }
.n3 { padding-left: 44px; }
.sel { background: #d5dff1; }
.ital { font-style: italic; }
.pm { flex: none; width: 9px; height: 9px; border: 1px solid #aaa; background: #fff; font: 9px/7px "DejaVu Sans", sans-serif; color: #000; }
.pm.none { visibility: hidden; }
.ti { width: 12px; height: 12px; margin: 0 8px 0 7px; }
.res { width: 14px; height: 15px; margin: 0 7px 0 6px; }
.tag { flex: none; width: 15px; height: 9px; margin: 0 6px; border: 1px solid #5f7fa5; background: #e8eef6; color: #234; font: bold 6px/7px "DejaVu Sans", sans-serif; text-align: center; }
.fx { width: 15px; margin: 0 6px; font: italic 16px/16px "Liberation Serif", serif; text-align: center; }
.stabs { display: flex; gap: 4px; height: 21px; margin: 0 5px 3px 9px; color: #000; }
.stabs button { flex: 1; display: flex; align-items: center; justify-content: center; gap: 4px; background: #fff; border: 1px solid #c6c6c6; border-top: 0; }
.stabs .on { gap: 6px; border-bottom: 2px solid #1b468b; border-left: 0; }
.rtree { display: flex; align-items: center; justify-content: center; gap: 5px; height: 22px; margin: 0 5px 0 9px; background: #fff; border: 1px solid #c6c6c6; border-top: 0; color: #000; }

/* status bar */
.status { display: flex; align-items: center; height: 28px; background: #1b468b; color: #fff; white-space: nowrap; }
.status > button, .s3 { display: flex; align-items: center; height: 24px; border-right: 1px solid #c8d0de; }
.s1 { width: 98px; padding-left: 9px; gap: 4px; }
.s2 { width: 119px; padding-left: 8px; gap: 4px; color: #0a1a33; }
.status .s2 { font-size: 11px; }
.s3 { width: 106px; justify-content: center; }
.s4 { width: 132px; text-align: center; }
.pct { margin-left: auto; margin-right: 23px; }
.zoom { display: flex; align-items: center; gap: 8px; margin-right: 12px; }
.range { position: relative; width: 121px; height: 14px; }
.range input { display: block; width: 100%; height: 14px; margin: 0; appearance: none; background: linear-gradient(#fff, #fff) center / 100% 1px no-repeat; }
.range input::-webkit-slider-thumb { appearance: none; width: 3px; height: 12px; background: #fff; }
.range i { position: absolute; left: 60px; top: 4px; width: 1px; height: 7px; background: #fff; }

.arrow { position: absolute; left: 189px; top: 320px; filter: drop-shadow(3px 5px 3px rgba(0, 0, 0, .5)); pointer-events: none; }
```
